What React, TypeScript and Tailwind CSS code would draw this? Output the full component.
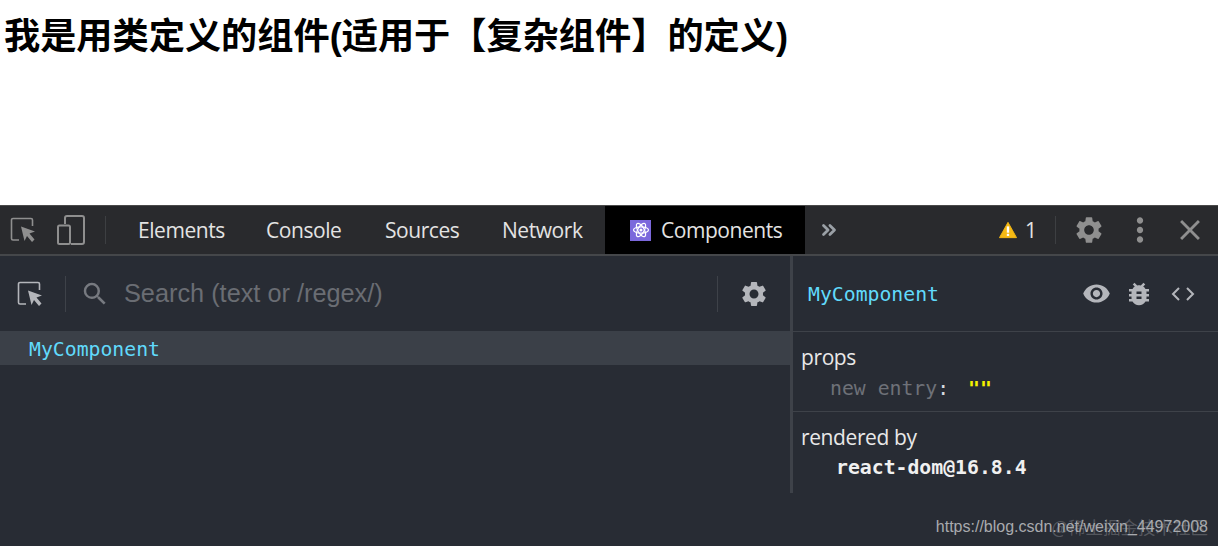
import { MdBugReport, MdClose, MdMoreVert, MdSearch, MdSettings, MdVisibility } from "react-icons/md";
import { ChevronsRight } from "lucide-react";

const uiFont = "font-['Open_Sans','Noto_Sans',sans-serif]";
const monoFont = "font-['DejaVu_Sans_Mono',monospace]";

function InspectIcon({ className }: { className?: string }) {
  return (
    <svg viewBox="0 0 26 26" className={className} fill="none">
      <path d="M9 23H3a1.5 1.5 0 0 1-1.5-1.5V3A1.5 1.5 0 0 1 3 1.5h18A1.5 1.5 0 0 1 22.500 3v6" stroke="currentColor" strokeWidth="1.6" />
      <path d="M11 9.500l14 5-5.500 2 5 6-2.500 2.500-5-6-2.500 5z" fill="currentColor" />
    </svg>
  );
}

function DeviceIcon() {
  return (
    <svg viewBox="0 0 28 30" className="w-[28px] h-[30px] text-[#8f8f8f]" fill="none" stroke="currentColor" strokeWidth="2">
      <path d="M8 9V3a2 2 0 0 1 2-2h15a2 2 0 0 1 2 2v24a2 2 0 0 1-2 2h-11" />
      <rect x="1" y="10.500" width="12" height="18.500" rx="1.500" />
    </svg>
  );
}

function ReactLogo() {
  return (
    <div className="w-[21px] h-[21px] bg-[#7b68dc] flex items-center justify-center">
      <svg viewBox="0 0 24 24" className="w-[18px] h-[18px]" fill="none" stroke="#fff" strokeWidth="1.6">
        <circle cx="12" cy="12" r="2" fill="#fff" stroke="none" />
        <ellipse cx="12" cy="12" rx="10" ry="4.200" />
        <ellipse cx="12" cy="12" rx="10" ry="4.200" transform="rotate(60 12 12)" />
        <ellipse cx="12" cy="12" rx="10" ry="4.200" transform="rotate(120 12 12)" />
      </svg>
    </div>
  );
}

function WarningIcon() {
  return (
    <svg viewBox="0 0 20 18" className="w-[18px] h-[18px]">
      <path d="M10 0.500L19.500 17.500H0.500z" fill="#f5b914" stroke="#f5b914" strokeLinejoin="round" />
      <rect x="8.700" y="5" width="2.600" height="7" fill="#fff" />
      <rect x="8.700" y="13.200" width="2.600" height="2.400" fill="#fff" />
    </svg>
  );
}

function CodeIcon() {
  return (
    <svg viewBox="0 0 24 16" className="w-[24px] h-[16px] text-[#b4b6bb]" fill="none" stroke="currentColor" strokeWidth="2">
      <path d="M8 2L2 8l6 6M16 2l6 6-6 6" />
    </svg>
  );
}

function Tab({ label, className }: { label: string; className: string }) {
  return <div className={`pt-[1px] text-[21px] text-[#e3e3e3] tracking-[-0.45px] ${className}`}>{label}</div>;
}

export default function App() {
  return (
    <div className="relative w-[1218px] h-[546px] overflow-hidden bg-white flex flex-col">
      <div className="h-[205px] shrink-0 pl-[4px] pt-[12px]">
        <h1 className="text-[36.2px] leading-[50px] font-bold text-black whitespace-nowrap font-['Liberation_Sans','Noto_Sans_CJK_SC',sans-serif]">
          我是用类定义的组件(适用于【复杂组件】的定义)
        </h1>
      </div>

      {/* toolbar */}
      <div className={`h-[51px] shrink-0 bg-[#292a2d] border-t border-[#4a4a4a] border-b-2 border-b-[#45474a] flex items-center ${uiFont}`}>
        <div className="w-[106px] flex items-center shrink-0">
          <InspectIcon className="w-[26px] h-[26px] ml-[10px] text-[#8f8f8f]" />
          <div className="ml-[21px]"><DeviceIcon /></div>
          <div className="ml-[20px] w-px h-[28px] bg-[#3d3f42]" />
        </div>
        <Tab label="Elements" className="ml-[32px] w-[128px]" />
        <Tab label="Console" className="w-[119px]" />
        <Tab label="Sources" className="w-[117px]" />
        <Tab label="Network" className="w-[103px]" />
        <div className="w-[200px] h-full bg-black flex items-center pl-[25px] gap-[10px]">
          <ReactLogo />
          <Tab label="Components" className="" />
        </div>
        <ChevronsRight className="ml-[13px] w-[22px] h-[22px] text-[#9aa0a6]" strokeWidth={3} />
        <div className="ml-auto flex items-center">
          <WarningIcon />
          <span className="ml-[8px] pt-[1px] text-[21px] text-[#e3e3e3]">1</span>
          <div className="ml-[18px] w-px h-[28px] bg-[#3d3f42]" />
          <MdSettings className="ml-[17px] w-[32px] h-[32px] text-[#8f8f8f]" />
          <MdMoreVert className="ml-[16px] w-[38px] h-[38px] text-[#8f8f8f]" />
          <MdClose className="ml-[14px] mr-[11px] w-[34px] h-[34px] text-[#8f8f8f]" />
        </div>
      </div>

      {/* panes */}
      <div className="flex-1 bg-[#282c34] flex min-h-0">
        <div className="w-[790px] shrink-0 flex flex-col">
          <div className="h-[75px] flex items-center shrink-0">
            <InspectIcon className="w-[26px] h-[26px] ml-[17px] text-[#b4b6bb]" />
            <div className="ml-[22px] w-px h-[36px] bg-[#3e4249]" />
            <MdSearch className="ml-[14px] w-[30px] h-[30px] text-[#777a80]" />
            <div className="ml-[14px] text-[25.3px] text-[#6a6d73] font-['Liberation_Sans',sans-serif]">Search (text or /regex/)</div>
            <div className="ml-auto w-px h-[36px] bg-[#3e4249]" />
            <MdSettings className="ml-[21px] mr-[21px] w-[30px] h-[30px] text-[#b4b6bb]" />
          </div>
          <div className={`h-[34px] shrink-0 bg-[#3b4048] pl-[29px] pt-[3px] flex items-center text-[19.8px] text-[#61dafb] ${monoFont}`}>
            MyComponent
          </div>
        </div>

        <div className="flex-1 flex flex-col">
          <div className="h-[237px] border-l-[3px] border-[#3e4249] shrink-0 flex flex-col">
            <div className="h-[76px] shrink-0 border-b border-[#3e4249] flex items-center pl-[15px]">
              <span className={`pt-[2px] text-[19.8px] text-[#61dafb] ${monoFont}`}>MyComponent</span>
              <div className="ml-auto flex items-center mr-[23px]">
                <MdVisibility className="w-[29px] h-[29px] text-[#b4b6bb]" />
                <MdBugReport className="ml-[13px] w-[30px] h-[30px] text-[#b4b6bb]" />
                <div className="ml-[17px]"><CodeIcon /></div>
              </div>
            </div>
            <div className={`h-[80px] shrink-0 border-b border-[#3e4249] pl-[8px] pt-[11px] ${uiFont}`}>
              <div className="text-[21px] leading-[28px] text-[#e8e8e8] tracking-[-0.4px]">props</div>
              <div className={`ml-[29px] mt-[4px] text-[19.8px] leading-[28px] whitespace-nowrap ${monoFont}`}>
                <span className="text-[#6e7178]">new entry</span>
                <span className="text-[#d7dae0]">:</span>
                <span className="ml-[19px] font-bold text-[#f5f000]">""</span>
              </div>
            </div>
            <div className={`flex-1 pl-[8px] pt-[11px] ${uiFont}`}>
              <div className="text-[21px] leading-[28px] text-[#e8e8e8] tracking-[-0.4px]">rendered by</div>
              <div className={`ml-[35px] mt-[3px] text-[19.8px] leading-[28px] font-bold text-[#f0f0f0] whitespace-nowrap ${monoFont}`}>
                react-dom@16.8.4
              </div>
            </div>
          </div>
        </div>
      </div>

      {/* csdn watermark */}
      <div className="absolute right-[10px] top-[516px] text-[16px] leading-[22px] text-[#a8aaae] whitespace-nowrap font-['Liberation_Sans',sans-serif]">
        https://blog.csdn.net/weixin_44972008
      </div>
      <div className="absolute right-[10px] top-[516px] text-[17.5px] leading-[22px] text-[#a8aaae]/35 whitespace-nowrap font-['Noto_Sans_CJK_SC',sans-serif]">
        @稀土掘金技术社区
      </div>
    </div>
  );
}
